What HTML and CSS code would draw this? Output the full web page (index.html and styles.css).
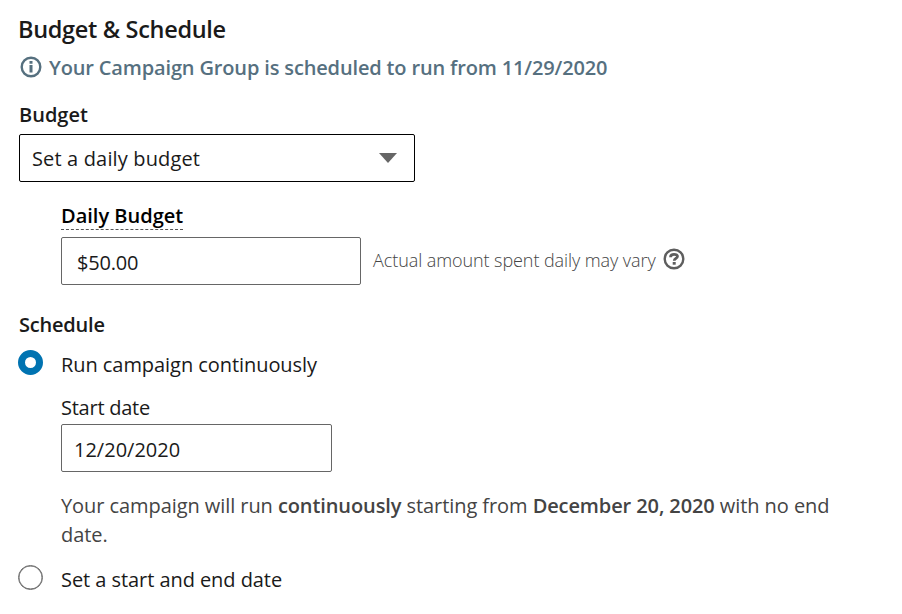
FILE: index.html
```
<!DOCTYPE html>
<html lang="en">
<head>
    <meta charset="UTF-8">
    <meta name="viewport" content="width=device-width, initial-scale=1.0">
    <title>Budget &amp; Schedule</title>
    <link rel="stylesheet" href="styles.css">
</head>
<body>
    <form class="campaign-form">
        <h1 class="title">Budget &amp; Schedule</h1>
        <div class="notice">
            <svg class="icon" width="22" height="22" viewBox="0 0 22 22">
                <circle cx="11" cy="11" r="9.3" fill="none" stroke="currentColor" stroke-width="2.4"/>
                <path d="M9.5 5h3v2.8h-3zM9.5 9h3v7.5h-3z" fill="currentColor"/>
            </svg>
            <span class="notice-text">Your Campaign Group is scheduled to run from 11/29/2020</span>
        </div>

        <h2 class="section-label budget-label">Budget</h2>
        <div class="select" role="button" tabindex="0">
            <span class="select-text">Set a daily budget</span>
            <svg width="18" height="10" viewBox="0 0 18 10">
                <path d="M0 0h18L9 10z" fill="#666"/>
            </svg>
        </div>

        <div class="indent daily">
            <label class="daily-label" for="daily">Daily Budget</label>
            <div class="daily-row">
                <input type="text" id="daily" class="daily-input" value="$50.00">
                <span class="hint">Actual amount spent daily may vary</span>
                <svg class="icon help" width="22" height="22" viewBox="0 0 22 22">
                    <circle cx="11" cy="11" r="9.3" fill="none" stroke="currentColor" stroke-width="2.4"/>
                    <path d="M7.5 9.2C7.5 7.2 8.8 6.3 11 6.3s3.5.9 3.5 2.3c0 1.9-3.3 1.5-3.3 4.2" fill="none" stroke="currentColor" stroke-width="2.7"/>
                    <path d="M9.7 14h3v2.7h-3z" fill="currentColor"/>
                </svg>
            </div>
        </div>

        <h2 class="section-label schedule-label">Schedule</h2>
        <div class="option">
            <input type="radio" name="schedule" id="continuous" checked>
            <label for="continuous">Run campaign continuously</label>
        </div>
        <div class="indent start">
            <label class="start-label" for="start">Start date</label>
            <input type="text" id="start" class="start-input" value="12/20/2020">
            <p class="summary">Your campaign will run <strong>continuously</strong> starting from <strong>December 20, 2020</strong> with no end date.</p>
        </div>
        <div class="option">
            <input type="radio" name="schedule" id="range">
            <label for="range">Set a start and end date</label>
        </div>
    </form>
</body>
</html>
```
FILE: styles.css
```
* {
    box-sizing: border-box;
}
body {
    margin: 0;
    background: #fff;
    color: #1a1a1a;
    font-family: "Open Sans", sans-serif;
    font-size: 20px;
    line-height: 28px;
}
.campaign-form {
    padding: 14px 19px 0;
}
h1, h2, p {
    margin: 0;
}
.title {
    margin: -1px 0 0 -1px;
    font-size: 23.5px;
    font-weight: 600;
    letter-spacing: -0.32px;
    line-height: 33px;
}
.notice {
    display: flex;
    align-items: center;
    gap: 7px;
    margin-top: 8px;
    padding-left: 1px;
    color: #56707f;
    font-weight: 600;
    letter-spacing: -0.15px;
}
.icon {
    flex: none;
    margin-top: -2px;
}
.section-label {
    font-size: 20px;
    font-weight: 600;
}
.budget-label {
    margin: 19px 0 5px;
}
.select {
    display: flex;
    align-items: center;
    justify-content: space-between;
    width: 396px;
    height: 48px;
    padding: 0 17px 0 12px;
    border: 1px solid #000;
    border-radius: 2px;
}
.select-text {
    padding-top: 2px;
    letter-spacing: 0.15px;
}
.indent {
    padding-left: 42px;
}
.daily {
    margin-top: 20px;
}
.daily-label {
    display: inline-block;
    vertical-align: top;
    height: 28px;
    border-bottom: 1px dashed #555;
    color: #000;
    font-weight: 600;
}
.daily-row {
    display: flex;
    align-items: center;
    margin-top: 7px;
}
input[type="text"] {
    display: block;
    height: 48px;
    border: 1px solid #666;
    border-radius: 2px;
    background: #fff;
    color: #1a1a1a;
    font: inherit;
}
.daily-input {
    width: 300px;
    padding: 2px 15px 0;
    letter-spacing: -0.2px;
}
.hint {
    margin: -2px 0 0 12px;
    color: #444;
    font-size: 18px;
    font-weight: 300;
    letter-spacing: -0.08px;
}
.help {
    margin: -4px 0 0 7px;
    color: #5e5e5e;
}
.schedule-label {
    margin: 26px 0 11px;
    letter-spacing: -0.2px;
}
.option {
    display: flex;
    align-items: flex-start;
}
.option label {
    padding-top: 1px;
    letter-spacing: -0.06px;
}
input[type="radio"] {
    appearance: none;
    width: 25px;
    height: 25px;
    margin: 0 18px 0 -1px;
    border: 1px solid #666;
    border-radius: 50%;
    background: #fff;
    box-shadow: inset 0 0 0 0.5px #666;
}
input[type="radio"]:checked {
    border: 7px solid #0073b1;
    box-shadow: none;
}
.start {
    margin-top: 15px;
}
.start-label {
    display: block;
    margin-bottom: 2px;
    letter-spacing: -0.25px;
}
.start-input {
    width: 271px;
    padding: 2px 12px 0;
}
.summary {
    max-width: 790px;
    margin: 19px 0 16px;
    color: #444;
    letter-spacing: -0.07px;
    line-height: 29px;
}
.summary strong {
    font-weight: 600;
    letter-spacing: -0.1px;
}
```
